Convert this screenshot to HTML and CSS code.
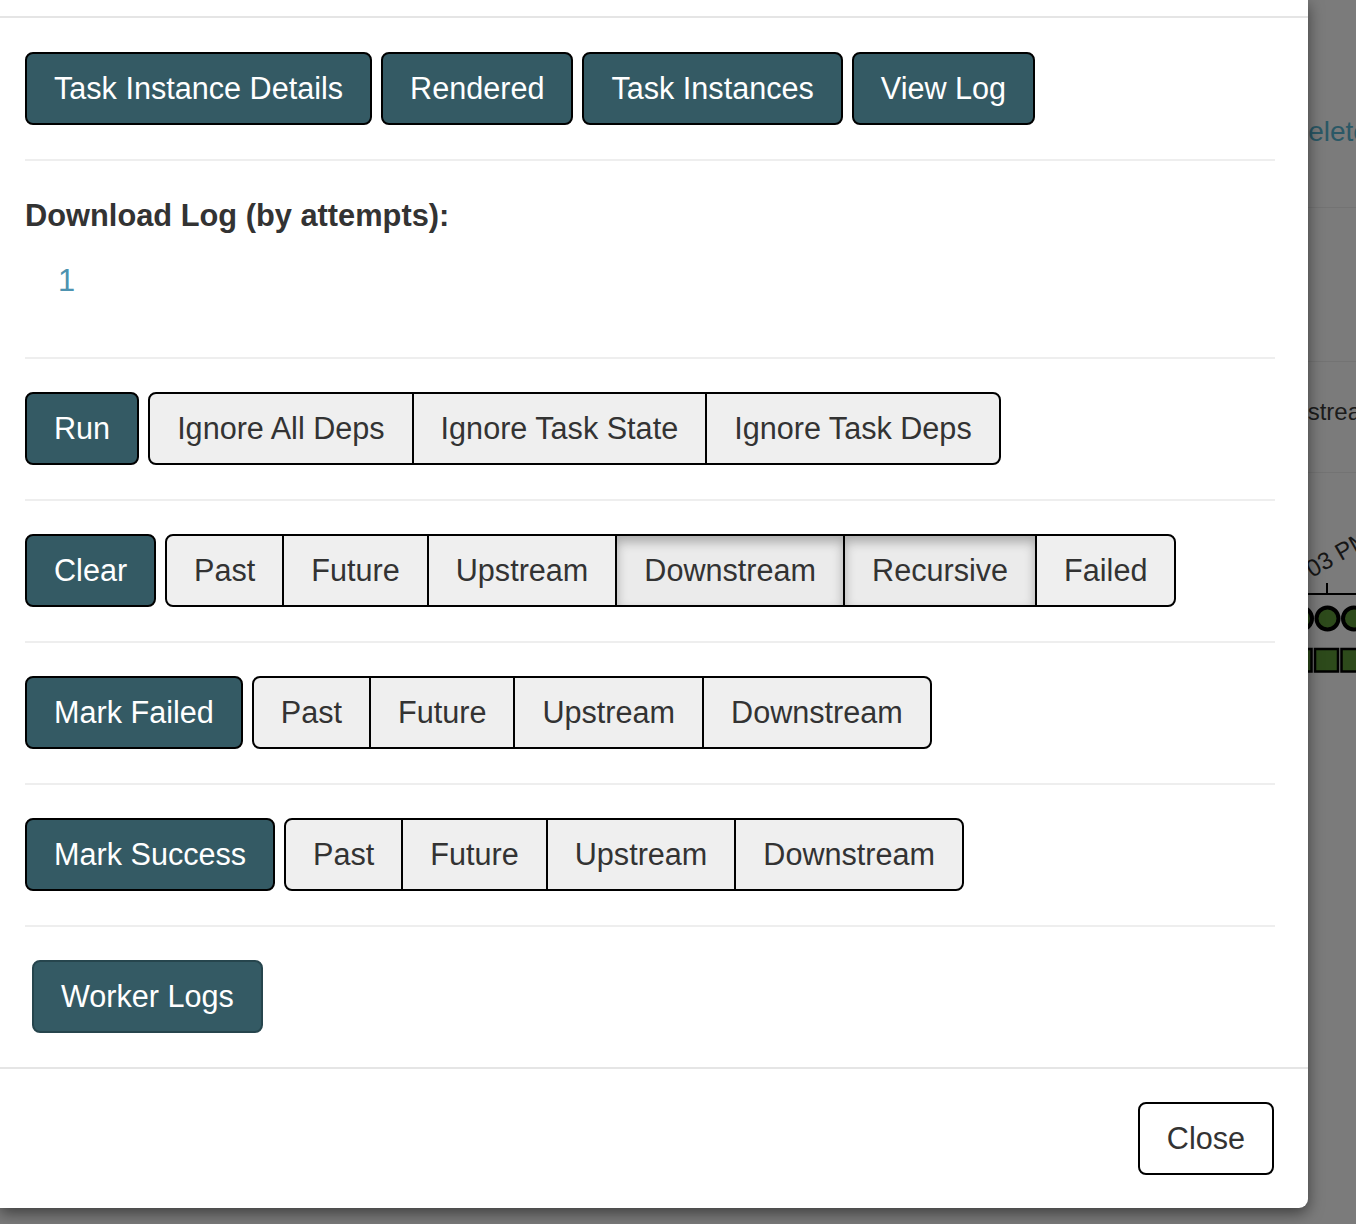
FILE: index.html
```html
<!DOCTYPE html>
<html>
<head>
<meta charset="utf-8">
<link rel="stylesheet" href="styles.css">
</head>
<body>
<svg class="backdrop" width="48" height="700" viewBox="0 0 48 700">
  <text x="-20" y="140.5" class="bd-link">Delete</text>
  <line x1="0" y1="207.5" x2="48" y2="207.5" class="bd-rule"/>
  <line x1="0" y1="361.5" x2="48" y2="361.5" class="bd-rule"/>
  <text x="-31" y="420" class="bd-text">Upstream</text>
  <line x1="0" y1="472.5" x2="48" y2="472.5" class="bd-rule"/>
  <text x="4" y="578" transform="rotate(-30 4 578)" class="bd-axis">03 PM</text>
  <line x1="19" y1="583" x2="19" y2="594" stroke="#000" stroke-width="2"/>
  <line x1="0" y1="594" x2="48" y2="594" stroke="#000" stroke-width="2"/>
  <circle cx="-7" cy="618.5" r="11" class="bd-node"/>
  <circle cx="19.5" cy="618.5" r="11" class="bd-node"/>
  <circle cx="46" cy="618.5" r="11" class="bd-node"/>
  <rect x="-19.5" y="649" width="23" height="22.5" class="bd-sq"/>
  <rect x="7" y="649" width="23" height="22.5" class="bd-sq"/>
  <rect x="33.5" y="649" width="23" height="22.5" class="bd-sq"/>
</svg>

<div class="modal">
  <div class="modal-header"></div>
  <div class="modal-body">
    <section class="sec sec-first">
      <div class="btn-row">
        <a class="btn btn-primary">Task Instance Details</a>
        <a class="btn btn-primary">Rendered</a>
        <a class="btn btn-primary">Task Instances</a>
        <a class="btn btn-primary">View Log</a>
      </div>
    </section>

    <section class="sec sec-log">
      <h4 class="log-title">Download Log (by attempts):</h4>
      <div class="attempts"><a class="attempt-link">1</a></div>
    </section>

    <section class="sec">
      <div class="btn-row">
        <a class="btn btn-primary">Run</a>
        <div class="btn-group">
          <a class="btn">Ignore All Deps</a>
          <a class="btn">Ignore Task State</a>
          <a class="btn">Ignore Task Deps</a>
        </div>
      </div>
    </section>

    <section class="sec">
      <div class="btn-row">
        <a class="btn btn-primary">Clear</a>
        <div class="btn-group">
          <a class="btn">Past</a>
          <a class="btn">Future</a>
          <a class="btn">Upstream</a>
          <a class="btn active">Downstream</a>
          <a class="btn active">Recursive</a>
          <a class="btn">Failed</a>
        </div>
      </div>
    </section>

    <section class="sec">
      <div class="btn-row">
        <a class="btn btn-primary">Mark Failed</a>
        <div class="btn-group">
          <a class="btn">Past</a>
          <a class="btn">Future</a>
          <a class="btn">Upstream</a>
          <a class="btn">Downstream</a>
        </div>
      </div>
    </section>

    <section class="sec">
      <div class="btn-row">
        <a class="btn btn-primary">Mark Success</a>
        <div class="btn-group">
          <a class="btn">Past</a>
          <a class="btn">Future</a>
          <a class="btn">Upstream</a>
          <a class="btn">Downstream</a>
        </div>
      </div>
    </section>

    <section class="sec sec-last">
      <div class="btn-row worker-row">
        <a class="btn btn-primary btn-worker">Worker Logs</a>
      </div>
    </section>
  </div>
  <div class="modal-footer">
    <button class="btn btn-close">Close</button>
  </div>
</div>
</body>
</html>
```

FILE: styles.css
```css
html, body {
  margin: 0;
  padding: 0;
}

body {
  width: 1356px;
  height: 1224px;
  overflow: hidden;
  background: #7b7b7b;
  font-family: "Liberation Sans", Arial, sans-serif;
  color: #333;
}

.backdrop {
  position: absolute;
  left: 1308px;
  top: 0;
  overflow: hidden;
}

.bd-link {
  font-family: "Liberation Sans", Arial, sans-serif;
  font-size: 28px;
  fill: #2a5866;
}

.bd-text {
  font-family: "Liberation Sans", Arial, sans-serif;
  font-size: 24px;
  fill: #1c1c1c;
}

.bd-axis {
  font-family: "Liberation Sans", Arial, sans-serif;
  font-size: 24px;
  fill: #161616;
}

.bd-rule {
  stroke: #737373;
  stroke-width: 1;
}

.bd-node {
  fill: #2d4a1b;
  stroke: #000;
  stroke-width: 4;
}

.bd-sq {
  fill: #2d4a1b;
  stroke: #000;
  stroke-width: 2.5;
}

.modal {
  position: relative;
  width: 1308px;
  background: #fff;
  border-radius: 0 0 9px 0;
  box-shadow: 0 5px 15px rgba(0, 0, 0, 0.5);
}

.modal-header {
  height: 16px;
  border-bottom: 2px solid #e5e5e5;
}

.modal-body {
  padding: 0 33px 0 25px;
}

.sec {
  padding: 33px 0 34px;
  border-bottom: 2px solid #eee;
}

.sec-first {
  padding-top: 34px;
}

.sec-log {
  padding-bottom: 55px;
}

.sec-last {
  border-bottom: none;
}

.log-title {
  margin: 0;
  font-size: 30.8px;
  line-height: 43px;
  font-weight: bold;
  color: #333;
}

.attempts {
  margin-top: 22px;
  padding-left: 33px;
  font-size: 30.8px;
  line-height: 43px;
}

.attempt-link {
  color: #4e93b0;
  text-decoration: none;
}

.btn-row {
  display: flex;
  align-items: flex-start;
  gap: 9px;
}

.worker-row {
  padding-left: 7px;
}

.btn {
  display: inline-block;
  box-sizing: border-box;
  padding: 13px 27px;
  font-family: "Liberation Sans", Arial, sans-serif;
  font-size: 30.6px;
  line-height: 43px;
  color: #333;
  background: #efefef;
  border: 2px solid #000;
  border-radius: 8px;
  white-space: nowrap;
  text-decoration: none;
  cursor: pointer;
}

.btn-primary {
  color: #fff;
  background: #345a64;
}

.btn-worker {
  border-color: #26454d;
}

.btn-group {
  display: flex;
}

.btn-group .btn {
  border-radius: 0;
  margin-left: -2px;
}

.btn-group .btn:first-child {
  margin-left: 0;
  border-radius: 8px 0 0 8px;
}

.btn-group .btn:last-child {
  border-radius: 0 8px 8px 0;
}

.btn.active {
  background: #ebebeb;
  box-shadow: inset 0 6px 11px rgba(0, 0, 0, 0.28);
}

.modal-footer {
  display: flex;
  justify-content: flex-end;
  padding: 33px 34px 33px 0;
  border-top: 2px solid #e5e5e5;
}

.btn-close {
  background: #fff;
  color: #333;
}
```
